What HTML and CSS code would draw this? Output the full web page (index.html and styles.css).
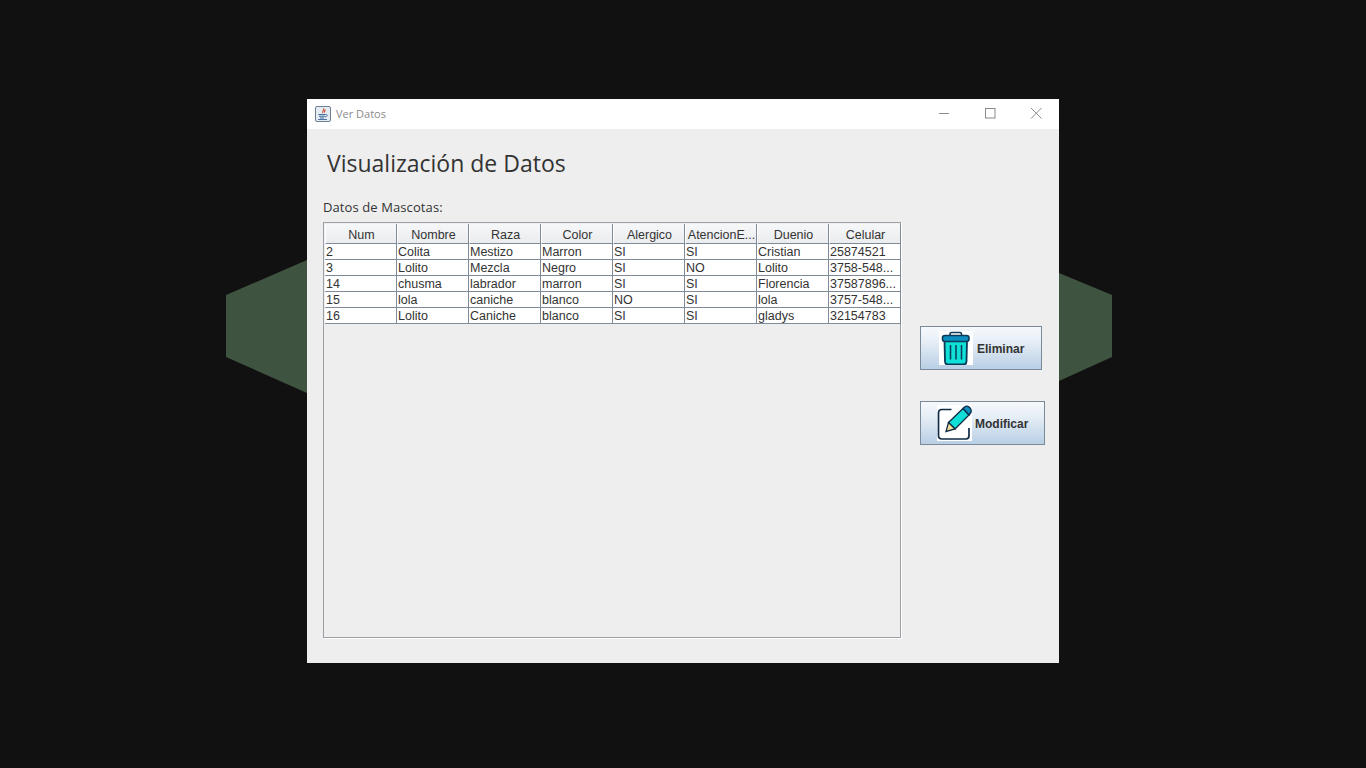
FILE: index.html
```html
<!DOCTYPE html>
<html lang="es">
<head>
<meta charset="utf-8">
<title>Ver Datos</title>
<link rel="stylesheet" href="styles.css">
</head>
<body>
<svg class="backdrop" width="1366" height="768" viewBox="0 0 1366 768" aria-hidden="true">
  <polygon points="226,295 307,260 307,393 226,357" fill="#3e5340"/>
  <polygon points="1059,273 1112,295 1112,357 1059,381" fill="#3e5340"/>
</svg>
<div class="window">
  <header class="titlebar">
    <svg class="app-icon" width="16" height="16" viewBox="0 0 16 16">
      <rect x="0.5" y="0.5" width="15" height="15" rx="1.5" fill="#e4ebf3" stroke="#6f7f92"/>
      <path d="M8.5 2.5c1.5 1.5-2 2.5-.5 4.5M10 3.5c.6 1-1 1.6-.4 3" fill="none" stroke="#c8421f" stroke-width="1.1"/>
      <path d="M3.5 8.5h7M4 10.3h6M5 12h4" stroke="#3d6a9a" stroke-width="1.1"/>
      <path d="M10.5 8.5c2.5-.5 2.5 2-.5 2.5M3 13.5h9" fill="none" stroke="#3d6a9a" stroke-width=".9"/>
    </svg>
    <span class="title-text">Ver Datos</span>
    <div class="controls">
      <svg class="ctl" width="46" height="30" viewBox="0 0 46 30"><path d="M18 14.500h10" stroke="#8a8a8a"/></svg>
      <svg class="ctl" width="46" height="30" viewBox="0 0 46 30"><rect x="18.500" y="9.500" width="9.500" height="9.500" fill="none" stroke="#8a8a8a"/></svg>
      <svg class="ctl" width="46" height="30" viewBox="0 0 46 30"><path d="M18 9l10.500 10.500M28.500 9L18 19.500" stroke="#8a8a8a" fill="none"/></svg>
    </div>
  </header>
  <main class="content">
    <h1 class="heading">Visualización de Datos</h1>
    <div class="body-row">
      <section class="data-col">
        <div class="label">Datos de Mascotas:</div>
        <div class="pane">
          <table class="grid">
            <thead>
              <tr><th>Num</th><th>Nombre</th><th>Raza</th><th>Color</th><th>Alergico</th><th>AtencionE...</th><th>Duenio</th><th>Celular</th></tr>
            </thead>
            <tbody>
              <tr><td>2</td><td>Colita</td><td>Mestizo</td><td>Marron</td><td>SI</td><td>SI</td><td>Cristian</td><td>25874521</td></tr>
              <tr><td>3</td><td>Lolito</td><td>Mezcla</td><td>Negro</td><td>SI</td><td>NO</td><td>Lolito</td><td>3758-548...</td></tr>
              <tr><td>14</td><td>chusma</td><td>labrador</td><td>marron</td><td>SI</td><td>SI</td><td>Florencia</td><td>37587896...</td></tr>
              <tr><td>15</td><td>lola</td><td>caniche</td><td>blanco</td><td>NO</td><td>SI</td><td>lola</td><td>3757-548...</td></tr>
              <tr><td>16</td><td>Lolito</td><td>Caniche</td><td>blanco</td><td>SI</td><td>SI</td><td>gladys</td><td>32154783</td></tr>
            </tbody>
          </table>
        </div>
      </section>
      <aside class="actions">
        <button class="btn btn-delete" type="button">
          <svg class="btn-icon" width="34" height="34" viewBox="0 0 34 34">
            <rect width="34" height="34" fill="#fff"/>
            <path d="M11 5V3q0-1.500 1.500-1.500h8.500q1.500 0 1.500 1.500v2" fill="none" stroke="#0c3a57" stroke-width="1.600"/>
            <path d="M5.500 10h22.500l-.5 20.500q-.1 3-3 3H9q-2.900 0-3-3z" fill="#0fe0d8" stroke="#0c3a57" stroke-width="1.800"/>
            <rect x="3.500" y="4.500" width="26.500" height="6" rx="2.500" fill="#0a8fc0" stroke="#0c3a57" stroke-width="1.600"/>
            <path d="M11.500 14v14.500M17 14v14.500M22.500 14v14.500" stroke="#0c3a57" stroke-width="1.500"/>
          </svg>
          <span>Eliminar</span>
        </button>
        <button class="btn btn-edit" type="button">
          <svg class="btn-icon" width="35" height="36" viewBox="0 0 35 36">
            <rect width="35" height="36" fill="#fff"/>
            <path d="M14.500 4.500H5q-3.500 0-3.500 3.500v22.500q0 3.500 3.500 3.500h24q3 0 3-3.500V23" fill="none" stroke="#0f2a45" stroke-width="1.700"/>
            <path d="M11.500 17.500L26 3.500l6 6.500L18 24z" fill="#10dfd8" stroke="#0f2a45" stroke-width="1.300"/>
            <path d="M26 3.500l1.500-1.500q2.500-1.700 4.500 0l1.500 1.500q1.500 2.500 0 4.500L32 10z" fill="#0a8fc0" stroke="#0f2a45" stroke-width="1.300"/>
            <path d="M11.500 17.500L18 24l-9 2.500z" fill="#f4e29a" stroke="#0f2a45" stroke-width="1.300"/>
          </svg>
          <span>Modificar</span>
        </button>
      </aside>
    </div>
  </main>
</div>
</body>
</html>
```
FILE: styles.css
```css
* { box-sizing: border-box; }
html, body { margin: 0; height: 100%; }
body { background: #111111; overflow: hidden; position: relative; font-family: "Liberation Sans", Arial, sans-serif; }
.backdrop { position: absolute; left: 0; top: 0; }
.window {
  position: absolute; left: 307px; top: 99px;
  width: 752px; height: 564px;
  background: #eeeeee;
  display: flex; flex-direction: column;
}
.titlebar {
  height: 30px; background: #ffffff;
  display: flex; align-items: center;
  padding-left: 8px; flex: none;
}
.app-icon { display: block; }
.title-text {
  margin-left: 5px;
  margin-top: -2px;
  font: 11px "Open Sans", "Noto Sans", sans-serif;
  color: #8b8b8b;
}
.controls { margin-left: auto; display: flex; }
.ctl { display: block; }
.content { flex: 1; padding: 0 0 25px 16px; display: flex; flex-direction: column; }
.heading {
  margin: 17px 0 0 4px;
  font: 400 23px/34px "Open Sans", "Noto Sans", sans-serif;
  color: #333333;
  height: 34px;
}
.body-row { display: flex; flex: 1; margin-top: 20px; min-height: 0; }
.data-col { width: 578px; display: flex; flex-direction: column; }
.label {
  font: 13px/18px "Open Sans", "Noto Sans", sans-serif;
  letter-spacing: .1px;
  color: #333333;
  height: 24px;
  margin-top: -2px;
}
.pane {
  flex: 1;
  border: 1px solid #9aa0a6;
  box-shadow: 1px 1px 0 #ffffff;
  padding: 1px 0 0 1px;
  background: #eeeeee;
}
.grid {
  border-collapse: separate; border-spacing: 0;
  table-layout: fixed; width: 576px;
  font: 12.5px "Liberation Sans", Arial, sans-serif;
  color: #333333;
}
.grid th {
  width: 72px; height: 20px; padding: 2px 0 0 1px;
  font-weight: 400; text-align: center;
  background: linear-gradient(#f6f7f8, #eaecee);
  border-right: 1px solid #7f8b98;
  border-left: 1px solid #ffffff;
  border-bottom: 1px solid #7f8b98;
  white-space: nowrap; overflow: hidden;
}
.grid td {
  height: 16px; padding: 1px 0 0 1px;
  line-height: 14px;
  background: #ffffff;
  border-right: 1px solid #7f8b98;
  border-bottom: 1px solid #7f8b98;
  white-space: nowrap; overflow: hidden;
}
.actions {
  display: flex; flex-direction: column; align-items: flex-start;
  padding: 126px 0 0 19px;
  gap: 31px;
}
.btn {
  height: 44px; padding: 0;
  display: flex; align-items: center;
  border: 1px solid #7a8a99;
  background: linear-gradient(#f6f9fc 0%, #e6eef6 35%, #b9cfe5 100%);
  font: 700 12px "Liberation Sans", Arial, sans-serif;
  color: #333333;
}
.btn span { padding-top: 1px; }
.btn-delete { width: 122px; padding-left: 18px; }
.btn-delete span { margin-left: 4px; }
.btn-edit { width: 125px; padding-left: 16px; }
.btn-edit span { margin-left: 3px; }
.btn-icon { display: block; flex: none; }
```
